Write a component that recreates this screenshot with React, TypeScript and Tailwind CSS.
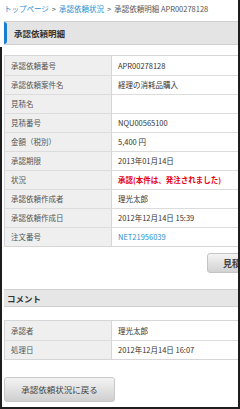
import type { ReactNode } from 'react'

const DETAILS: { label: string; value: ReactNode }[] = [
  { label: '承認依頼番号', value: 'APR00278128' },
  { label: '承認依頼案件名', value: '経理の消耗品購入' },
  { label: '見積名', value: '' },
  { label: '見積番号', value: 'NQU00565100' },
  { label: '金額（税別）', value: '5,400 円' },
  { label: '承認期限', value: '2013年01月14日' },
  {
    label: '状況',
    value: <span className="font-bold text-[#e60012]">承認(本件は、発注されました)</span>,
  },
  { label: '承認依頼作成者', value: '理光太郎' },
  { label: '承認依頼作成日', value: '2012年12月14日 15:39' },
  { label: '注文番号', value: <span className="text-[#2a8fd0]">NET21956039</span> },
]

const COMMENTS = [
  { label: '承認者', value: '理光太郎' },
  { label: '処理日', value: '2012年12月14日 16:07' },
]

function InfoTable({ rows }: { rows: { label: string; value: ReactNode }[] }) {
  return (
    <div className="w-[260px] border border-[#d6d6d6]">
      {rows.map((row, i) => (
        <div
          key={row.label}
          className={`flex h-[19px] items-center ${i > 0 ? 'border-t border-[#dcdcdc]' : ''}`}
        >
          <div className="flex h-full w-[107px] shrink-0 items-center border-r border-[#d6d6d6] bg-[#efefef] pl-[6px] text-[#555]">
            {row.label}
          </div>
          <div className="whitespace-nowrap pl-[6px] text-[#333]">{row.value}</div>
        </div>
      ))}
    </div>
  )
}

export default function App() {
  return (
    <div
      className="relative h-[409px] w-[240px] overflow-hidden bg-white text-[7.5px] leading-none"
      style={{ fontFamily: '"Noto Sans CJK JP", "Noto Sans", sans-serif' }}
    >
      {/* Breadcrumb */}
      <div className="flex h-[17px] items-center gap-[3px] whitespace-nowrap pl-[4px] pt-[1px] text-[7.5px] text-[#555]">
        <span className="text-[#2a8fd0]">トップページ</span>
        <span>&gt;</span>
        <span className="text-[#2a8fd0]">承認依頼状況</span>
        <span>&gt;</span>
        <span>承認依頼明細 APR00278128</span>
      </div>

      {/* Page heading */}
      <div className="ml-[4px] mt-[4px] flex h-[24px] w-[260px] items-center border-y border-[#d0d0d0] bg-[#e4e4e4]">
        <div className="h-full w-[3px] rounded-r-full bg-[#1a7fd0]" />
        <span className="pl-[7px] text-[8.5px] font-bold text-[#333]">承認依頼明細</span>
      </div>

      {/* Framed lower area */}
      <div className="mt-[2px] h-[362px] border-l-2 border-[#1e1e1e] pl-[2px] pt-[8px]">
        <InfoTable rows={DETAILS} />

        <div className="mt-[6px] flex justify-start pl-[203px]">
          <button className="h-[20px] w-[60px] shrink-0 whitespace-nowrap rounded-[3px] border border-[#c4c4c4] bg-linear-to-b from-[#f4f4f4] to-[#d2d2d2] pl-[15px] text-left text-[9px] font-bold text-[#444]">
            見積書
          </button>
        </div>

        {/* Comment heading */}
        <div className="mt-[16px] flex h-[18px] w-[260px] items-center border-y border-[#d0d0d0] bg-[#e6e6e6] pl-[3px] text-[8.5px] font-bold text-[#333]">
          コメント
        </div>

        <div className="mt-[13px]">
          <InfoTable rows={COMMENTS} />
        </div>

        <button className="mt-[17px] h-[25px] w-[111px] rounded-[3px] border border-[#c8c8c8] bg-linear-to-b from-[#f4f4f4] to-[#cfcfcf] text-[8.5px] text-[#444]">
          承認依頼状況に戻る
        </button>
      </div>

      {/* Device frame edges */}
      <div className="absolute right-0 top-0 h-full w-[2px] bg-[#1e1e1e]" />
      <div className="absolute bottom-0 left-0 h-[2px] w-full bg-[#1e1e1e]" />
    </div>
  )
}
